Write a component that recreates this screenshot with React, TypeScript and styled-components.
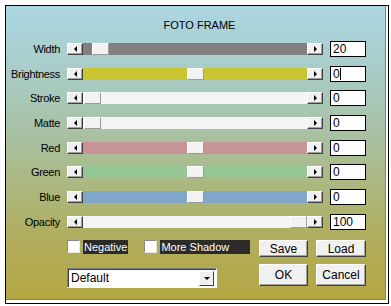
import { Fragment } from "react";
import styled, { createGlobalStyle } from "styled-components";

const GlobalStyle = createGlobalStyle`
  html, body {
    margin: 0;
    background: #fff;
  }
  body {
    font-family: "Liberation Sans", Arial, sans-serif;
    font-size: 11px;
    color: #000;
  }
`;

const Frame = styled.div`
  margin: 5px 0 0 5px;
  width: 384px;
  height: 299px;
  box-sizing: border-box;
  border: 1px solid #000;
  background: #fff;
  padding: 0 2px 3px 0;
`;

const Panel = styled.div`
  height: 100%;
  box-sizing: border-box;
  border-right: 1px solid #7c7c98;
  border-bottom: 1px solid #7c7c98;
  background: linear-gradient(
    to bottom,
    #acd6e3 0%,
    #a9ccc8 22%,
    #a8c2a6 42%,
    #abb882 60%,
    #b0ad5c 80%,
    #b5a744 100%
  );
  display: flex;
  flex-direction: column;
`;

const Title = styled.div`
  padding: 13px 0 0 8px;
  height: 13px;
  line-height: 13px;
  margin-bottom: 4.6px;
  text-align: center;
`;

const Rows = styled.div`
  display: grid;
  grid-template-columns: 54px 256px 36px;
  grid-auto-rows: 24.7px;
  column-gap: 7px;
  align-items: center;
`;

const Label = styled.div`
  text-align: right;
  white-space: nowrap;
  letter-spacing: -0.3px;
`;

const Slider = styled.div`
  display: flex;
  height: 12px;
`;

const ArrowBtn = styled.div<{ $dir: "left" | "right" }>`
  width: 16px;
  height: 12px;
  box-sizing: border-box;
  background: #f0f0f0;
  border: 1px solid;
  border-color: #fff #404040 #404040 #fff;
  box-shadow: inset -1px -1px #a0a0a0;
  display: flex;
  align-items: center;
  justify-content: center;

  &::after {
    content: "";
    width: 0;
    height: 0;
    border-top: 3px solid transparent;
    border-bottom: 3px solid transparent;
    ${(p) =>
      p.$dir === "left"
        ? "border-right: 3px solid #000;"
        : "border-left: 3px solid #000;"}
  }
`;

const Track = styled.div<{ $color: string }>`
  flex: 1;
  display: flex;
  background: ${(p) =>
    p.$color === "dotted"
      ? "repeating-conic-gradient(#ffffff 0 25%, #ececec 0 50%) 0 0 / 2px 2px"
      : p.$color};
`;

const Fill = styled.div``;

const Thumb = styled.div`
  width: 17px;
  height: 12px;
  box-sizing: border-box;
  background: #f2f2f2;
  border: 1px solid;
  border-color: #fff #9a9a9a #9a9a9a #fff;
`;

const ValueBox = styled.div`
  height: 16px;
  box-sizing: border-box;
  border: 1px solid #000;
  background: #fff;
  padding-left: 2px;
  font-size: 12px;
  line-height: 14px;
  display: flex;
  align-items: center;
`;

const Caret = styled.span`
  display: inline-block;
  width: 1px;
  height: 12px;
  background: #000;
`;

const Footer = styled.div`
  display: grid;
  grid-template-columns: 184px 49px 50px;
  grid-template-rows: 25px 28px;
  column-gap: 8px;
  padding-left: 61px;
`;

const CheckRow = styled.div`
  display: flex;
  align-items: center;
`;

const CheckItem = styled.label<{ $gap?: number }>`
  display: flex;
  align-items: center;
  margin-right: ${(p) => p.$gap ?? 0}px;
`;

const Box = styled.span`
  width: 13px;
  height: 13px;
  box-sizing: border-box;
  background: #fff;
  border: 1px solid;
  border-color: #8a8a8a #e8e8e8 #e8e8e8 #8a8a8a;
  margin-right: 3px;
`;

const CheckText = styled.span<{ $width?: number }>`
  background: #2b2b2b;
  color: #fff;
  height: 14px;
  line-height: 14px;
  padding: 0 1px;
  ${(p) => (p.$width ? `width: ${p.$width}px; box-sizing: border-box;` : "")}
`;

const Button = styled.div<{ $h: number; $top: number }>`
  height: ${(p) => p.$h}px;
  margin-top: ${(p) => p.$top}px;
  box-sizing: border-box;
  background: #f0f0f0;
  border: 1px solid;
  border-color: #fff #404040 #404040 #fff;
  box-shadow: inset -1px -1px #a0a0a0;
  display: flex;
  align-items: center;
  justify-content: center;
  font-size: 12px;
`;

const Select = styled.div`
  margin-top: 9px;
  width: 150px;
  height: 20px;
  box-sizing: border-box;
  border: 1px solid;
  border-color: #808080 #fff #fff #808080;
  box-shadow: inset 1px 1px #404040;
  background: #fff;
  display: flex;
  align-items: center;
  padding: 1px 2px 1px 3px;
  font-size: 12px;
`;

const SelectText = styled.span`
  flex: 1;
`;

const SelectArrow = styled.span`
  width: 15px;
  height: 15px;
  box-sizing: border-box;
  background: #f0f0f0;
  border: 1px solid;
  border-color: #fff #404040 #404040 #fff;
  display: flex;
  align-items: center;
  justify-content: center;

  &::after {
    content: "";
    border-left: 3px solid transparent;
    border-right: 3px solid transparent;
    border-top: 3px solid #000;
  }
`;

const sliders = [
  { label: "Width", color: "#808080", pos: 0.045, value: "20" },
  { label: "Brightness", color: "#c9c631", pos: 0.5, value: "0", caret: true },
  { label: "Stroke", color: "dotted", pos: 0.005, value: "0" },
  { label: "Matte", color: "dotted", pos: 0.005, value: "0" },
  { label: "Red", color: "#c79498", pos: 0.5, value: "0" },
  { label: "Green", color: "#95c794", pos: 0.5, value: "0" },
  { label: "Blue", color: "#80a7c9", pos: 0.5, value: "0" },
  { label: "Opacity", color: "dotted", pos: 1, value: "100" },
];

export default function App() {
  return (
    <>
      <GlobalStyle />
      <Frame>
        <Panel>
          <Title>FOTO FRAME</Title>
          <Rows>
            {sliders.map((s) => (
              <Fragment key={s.label}>
                <Label>{s.label}</Label>
                <Slider>
                  <ArrowBtn $dir="left" />
                  <Track $color={s.color}>
                    <Fill style={{ flexGrow: s.pos }} />
                    <Thumb />
                    <Fill style={{ flexGrow: 1 - s.pos }} />
                  </Track>
                  <ArrowBtn $dir="right" />
                </Slider>
                <ValueBox>
                  {s.value}
                  {s.caret && <Caret />}
                </ValueBox>
              </Fragment>
            ))}
          </Rows>
          <Footer>
            <CheckRow>
              <CheckItem $gap={16}>
                <Box />
                <CheckText>Negative</CheckText>
              </CheckItem>
              <CheckItem>
                <Box />
                <CheckText $width={90}>More Shadow</CheckText>
              </CheckItem>
            </CheckRow>
            <Button $h={17} $top={6}>Save</Button>
            <Button $h={17} $top={6}>Load</Button>
            <Select>
              <SelectText>Default</SelectText>
              <SelectArrow />
            </Select>
            <Button $h={22} $top={5}>OK</Button>
            <Button $h={22} $top={5}>Cancel</Button>
          </Footer>
        </Panel>
      </Frame>
    </>
  );
}
